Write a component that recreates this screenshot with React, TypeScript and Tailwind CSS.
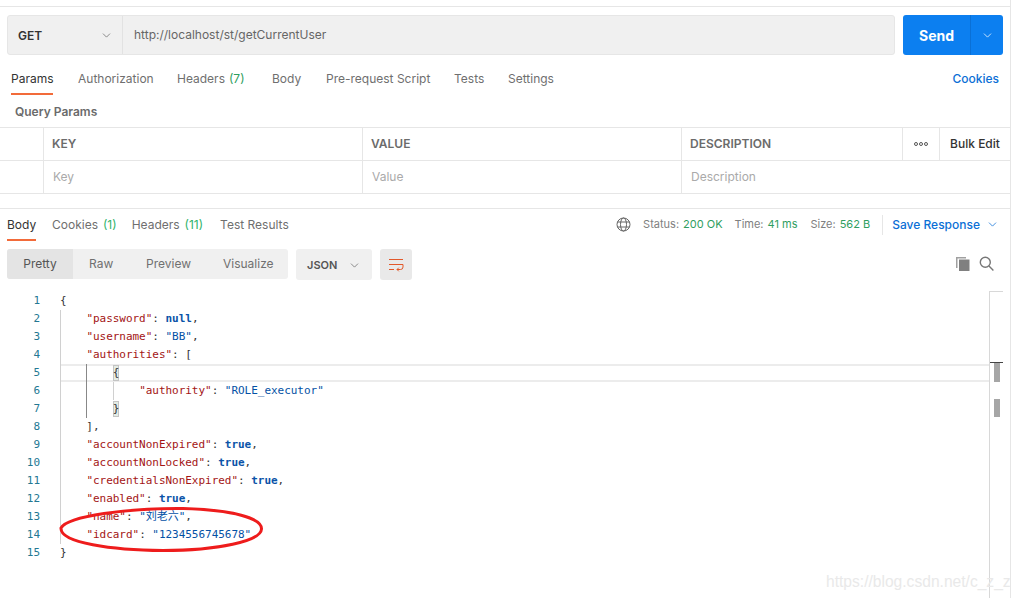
import { ChevronDown } from "lucide-react";

const requestTabs = [
  { label: "Params", width: "w-[42px]", mr: "mr-[25px]", active: true },
  { label: "Authorization", width: "w-[76px]", mr: "mr-[23px]" },
  { label: "Headers", width: "w-[67px]", mr: "mr-[28px]", count: "(7)" },
  { label: "Body", width: "w-[29px]", mr: "mr-[25px]" },
  { label: "Pre-request Script", width: "w-[104px]", mr: "mr-[24px]" },
  { label: "Tests", width: "w-[30px]", mr: "mr-[24px]" },
  { label: "Settings", width: "w-[47px]", mr: "" },
];

const key = "text-[#a31515]";
const val = "text-[#0451a5]";
const kw = "text-[#0b53a8] font-bold";
const punc = "text-[#333333]";

type Part = [string, string];

const codeLines: Part[][] = [
  [["{", punc]],
  [["    ", punc], ['"password"', key], [": ", punc], ["null", kw], [",", punc]],
  [["    ", punc], ['"username"', key], [": ", punc], ['"BB"', val], [",", punc]],
  [["    ", punc], ['"authorities"', key], [": [", punc]],
  [["        {", punc]],
  [["            ", punc], ['"authority"', key], [": ", punc], ['"ROLE_executor"', val]],
  [["        }", punc]],
  [["    ],", punc]],
  [["    ", punc], ['"accountNonExpired"', key], [": ", punc], ["true", kw], [",", punc]],
  [["    ", punc], ['"accountNonLocked"', key], [": ", punc], ["true", kw], [",", punc]],
  [["    ", punc], ['"credentialsNonExpired"', key], [": ", punc], ["true", kw], [",", punc]],
  [["    ", punc], ['"enabled"', key], [": ", punc], ["true", kw], [",", punc]],
  [["    ", punc], ['"name"', key], [": ", punc], ['"刘老六"', val], [",", punc]],
  [["    ", punc], ['"idcard"', key], [": ", punc], ['"1234556745678"', val]],
  [["}", punc]],
];

function RequestBar() {
  return (
    <div className="flex h-[40px] ml-[7px] mt-[8px] w-[996px] gap-[8px]">
      <div className="flex flex-1 bg-[#f0f0f0] border border-[#e6e6e6] rounded-[3px]">
        <div className="flex items-center justify-between w-[115px] h-full pl-[10px] pr-[9px] border-r border-[#e2e2e2]">
          <span className="text-[12px] font-semibold text-[#333333] pt-[1px]">GET</span>
          <ChevronDown size={13} strokeWidth={1.2} className="text-[#555555]" />
        </div>
        <div className="flex items-center pl-[11px] text-[12px] text-[#666666] pb-[1px]">http://localhost/st/getCurrentUser</div>
      </div>
      <div className="flex w-[100px] bg-[#0c7ff0] rounded-[3px] text-white">
        <div className="flex items-center justify-center w-[67px] text-[14px] font-bold">Send</div>
        <div className="flex items-center justify-center flex-1 border-l border-[#0a70d6]">
          <ChevronDown size={13} strokeWidth={1.4} />
        </div>
      </div>
    </div>
  );
}

function RequestTabs() {
  return (
    <div className="flex h-[41px] pt-[8px] pl-[11px] pr-[11px] text-[12px] text-[#6f6f6f]">
      {requestTabs.map((t) => (
        <div key={t.label} className={`relative flex items-center whitespace-nowrap pb-[1px] ${t.width} ${t.mr} ${t.active ? "text-[#333333]" : ""}`}>
          {t.label}
          {t.count && <span className="ml-[4px] text-[#2f9e5f]">{t.count}</span>}
          {t.active && <div className="absolute left-0 right-0 top-[30px] h-[2px] bg-[#f26b3a]" />}
        </div>
      ))}
      <div className="ml-auto flex items-center pb-[1px] text-[#0b6fd6] font-medium">Cookies</div>
    </div>
  );
}

function ParamsTable() {
  return (
    <div className="border-t border-[#e6e6e6] text-[12px]">
      <div className="flex h-[33px] border-b border-[#e6e6e6] font-semibold text-[#6b6b6b]">
        <div className="w-[44px] border-r border-[#e6e6e6]" />
        <div className="flex items-center w-[319px] pl-[8px] border-r border-[#e6e6e6]">KEY</div>
        <div className="flex items-center w-[319px] pl-[8px] border-r border-[#e6e6e6]">VALUE</div>
        <div className="flex items-center w-[221px] pl-[8px] border-r border-[#e6e6e6]">DESCRIPTION</div>
        <div className="flex items-center justify-center w-[37px] border-r border-[#e6e6e6]">
          <svg width="14" height="4" viewBox="0 0 14 4" fill="none" stroke="#444444" strokeWidth="0.9">
            <circle cx="2" cy="2" r="1.5" />
            <circle cx="7" cy="2" r="1.5" />
            <circle cx="12" cy="2" r="1.5" />
          </svg>
        </div>
        <div className="flex items-center justify-center flex-1 font-medium text-[#333333] whitespace-nowrap">Bulk Edit</div>
      </div>
      <div className="flex h-[33px] border-b border-[#e6e6e6] text-[#aaaaaa]">
        <div className="w-[44px] border-r border-[#e6e6e6]" />
        <div className="flex items-center w-[319px] pl-[9px] border-r border-[#e6e6e6]">Key</div>
        <div className="flex items-center w-[319px] pl-[9px] border-r border-[#e6e6e6]">Value</div>
        <div className="flex items-center pl-[9px]">Description</div>
      </div>
    </div>
  );
}

function ResponseHeader() {
  return (
    <div className="flex h-[34px] mt-[14px] border-t border-[#e6e6e6] pl-[7px] pb-[2px] text-[12px] text-[#6f6f6f]">
      <div className="relative flex items-center w-[29px] mr-[16px] text-[#333333]">
        Body
        <div className="absolute left-0 right-0 top-[30px] h-[2px] bg-[#f26b3a]" />
      </div>
      <div className="flex items-center mr-[15px] whitespace-nowrap">
        Cookies<span className="ml-[5px] text-[#2fb36a]">(1)</span>
      </div>
      <div className="flex items-center mr-[17px] whitespace-nowrap">
        Headers<span className="ml-[5px] text-[#2fb36a]">(11)</span>
      </div>
      <div className="flex items-center">Test Results</div>
      <div className="ml-auto flex items-center pr-[11px] text-[11px] whitespace-nowrap">
        <svg width="15" height="15" viewBox="0 0 15 15" fill="none" stroke="#666666" strokeWidth="1" className="mr-[12px]">
          <circle cx="7.5" cy="7.5" r="6.5" />
          <ellipse cx="7.5" cy="7.5" rx="3" ry="6.5" />
          <path d="M1.5 5h12M1.5 10h12" />
        </svg>
        <span className="text-[#808080]">Status:</span>
        <span className="ml-[4px] text-[#2f9e5f]">200 OK</span>
        <span className="ml-[12px] text-[#808080]">Time:</span>
        <span className="ml-[4px] text-[#2f9e5f]">41 ms</span>
        <span className="ml-[13px] text-[#808080]">Size:</span>
        <span className="ml-[4px] text-[#2f9e5f]">562 B</span>
        <div className="h-[20px] ml-[12px] mr-[9px] border-l border-[#e6e6e6]" />
        <span className="text-[12px] font-medium text-[#0b6fd6]">Save Response</span>
        <ChevronDown size={13} strokeWidth={1.4} className="ml-[6px] text-[#0b6fd6]" />
      </div>
    </div>
  );
}

function ResponseToolbar() {
  return (
    <div className="flex items-start mt-[7px] ml-[7px] h-[31px] text-[12px]">
      <div className="flex h-[30px] w-[281px] bg-[#f0f0f0] rounded-[3px] overflow-hidden text-[#707070]">
        <div className="flex items-center justify-center w-[66px] bg-[#e4e4e4] text-[#555555]">Pretty</div>
        <div className="flex items-center pl-[16px] w-[56px]">Raw</div>
        <div className="flex items-center pl-[17px] w-[78px]">Preview</div>
        <div className="flex items-center pl-[16px]">Visualize</div>
      </div>
      <div className="flex items-center h-[31px] w-[76px] ml-[8px] pl-[11px] pt-[1px] bg-[#f0f0f0] rounded-[3px] text-[#555555] text-[11px] font-semibold">
        JSON
        <ChevronDown size={13} strokeWidth={1.2} className="ml-[11px]" />
      </div>
      <div className="flex items-center justify-center h-[31px] w-[32px] ml-[8px] bg-[#e9e9e9] rounded-[3px]">
        <svg width="16" height="14" viewBox="0 0 16 14" fill="none" stroke="#e2582a" strokeWidth="1">
          <path d="M1 1.5h14M1 6.5h14M1 11.5h5" />
          <path d="M15 6.5v2.5a2.5 2.5 0 0 1-2.5 2.5H9M10.8 9.7L9 11.5l1.8 1.8" />
        </svg>
      </div>
      <div className="ml-auto flex items-center h-[28px] gap-[9px] pr-[16px]">
        <svg width="15" height="15" viewBox="0 0 15 15" fill="#808080">
          <path d="M4 3.5h10.5V15H4z" />
          <path d="M1 1h10v1.5H2.5V12H1z" fill="#a0a0a0" />
        </svg>
        <svg width="15" height="15" viewBox="0 0 15 15" fill="none" stroke="#777777" strokeWidth="1.4">
          <circle cx="6.3" cy="6.3" r="5" />
          <path d="M10 10l4.4 4.4" />
        </svg>
      </div>
    </div>
  );
}

function CodeView() {
  return (
    <div className="relative flex mt-[12px] font-['DejaVu_Sans_Mono','Noto_Sans_CJK_SC',monospace] text-[11px] leading-[18px] tracking-[-0.03px]">
      {/* current line + guides sit behind the text */}
      <div className="absolute left-[61px] top-[72px] w-[929px] h-[18px] border-y-2 border-[#ececec]" />
      <div className="absolute left-[60px] top-[18px] w-px h-[234px] bg-[#d0d0d0]" />
      <div className="absolute left-[86px] top-[72px] w-px h-[54px] bg-[#888888]" />
      <div className="absolute left-[113px] top-[90px] w-px h-[18px] bg-[#d0d0d0]" />
      <div className="absolute left-[113px] top-[73px] w-[6px] h-[16px] bg-[#e4ece4] border border-[#c4c4c4]" />
      <div className="absolute left-[113px] top-[109px] w-[6px] h-[16px] bg-[#e4ece4] border border-[#c4c4c4]" />

      <div className="relative w-[40px] text-right text-[#237893]">
        {codeLines.map((_, i) => (
          <div key={i} className="h-[18px]">{i + 1}</div>
        ))}
      </div>
      <div className="relative pl-[20px] whitespace-pre">
        {codeLines.map((parts, i) => (
          <div key={i} className="h-[18px]">
            {parts.map(([text, color], j) => (
              <span key={j} className={color}>{text}</span>
            ))}
          </div>
        ))}
      </div>
    </div>
  );
}

export default function App() {
  return (
    <div className="relative w-[1021px] h-[598px] overflow-hidden bg-white font-['Inter','Liberation_Sans',sans-serif]">
      <div className="w-[1011px] h-full border-r border-[#e6e6e6] pt-[6px]">
        <div className="border-t border-[#e6e6e6]">
          <RequestBar />
          <RequestTabs />
          <div className="flex items-center h-[31px] pl-[15px] text-[12px] font-semibold text-[#6b6b6b]">Query Params</div>
          <ParamsTable />
          <ResponseHeader />
          <ResponseToolbar />
          <CodeView />
        </div>
      </div>

      {/* editor overview ruler */}
      <div className="absolute left-[989px] top-[291px] w-[14px] h-[307px] border-l border-t border-[#d8d8d8]">
        <div className="absolute left-0 top-[70px] w-full h-px bg-[#444444]" />
        <div className="absolute left-[4px] top-[71px] w-[6px] h-[19px] bg-[#a6a6a6]" />
        <div className="absolute left-[4px] top-[107px] w-[6px] h-[18px] bg-[#a6a6a6]" />
      </div>

      {/* hand drawn annotation */}
      <svg className="absolute left-[58px] top-[503px]" width="208" height="50" viewBox="0 0 208 50" fill="none">
        <path d="M3 25C10 13 70 5 125 5.5C175 7 204 15 203.5 26C203 38 160 47.5 105 47.5C55 47 2 40 3 25z" stroke="#ee1c1c" strokeWidth="3" />
      </svg>

      <div className="absolute left-[826px] top-[570px] text-[15.6px] text-[#e9e9e9] font-['Liberation_Sans',sans-serif] whitespace-nowrap">https://blog.csdn.net/c_z_z</div>
    </div>
  );
}
